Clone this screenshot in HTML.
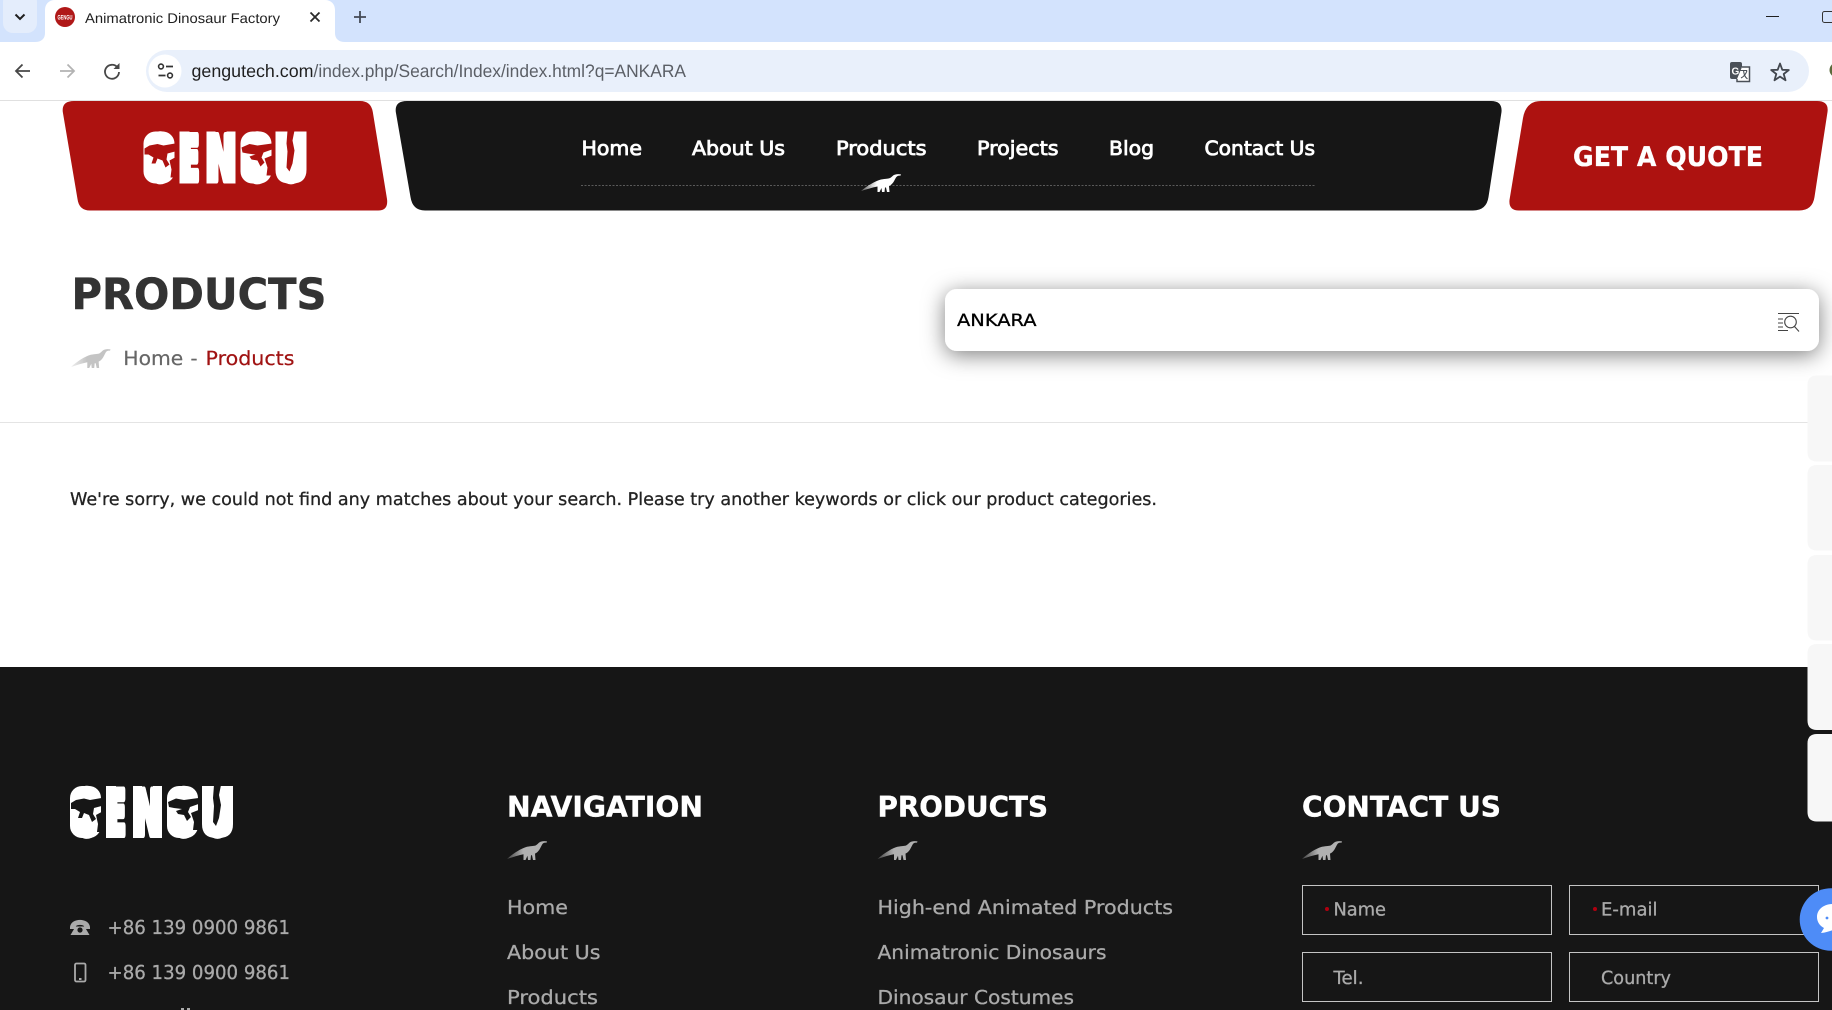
<!DOCTYPE html>
<html lang="en">
<head>
<meta charset="utf-8">
<title>Animatronic Dinosaur Factory</title>
<style>
html,body{margin:0;padding:0;width:1832px;height:1010px;overflow:hidden;background:#fff}
svg{display:block;position:absolute;left:0;top:0}
text{font-family:"Liberation Sans",sans-serif;text-rendering:geometricPrecision}
.m text,text.m{font-family:"DejaVu Sans","Liberation Sans",sans-serif}
a{cursor:pointer}
</style>
</head>
<body>
<svg width="1832" height="1010" viewBox="0 0 1832 1010" xmlns="http://www.w3.org/2000/svg">
<defs>
  <linearGradient id="fg" x1="0" x2="1" y1="0" y2="0">
    <stop offset="0" stop-color="#fff" stop-opacity=".3"/>
    <stop offset=".4" stop-color="#fff" stop-opacity="1"/>
  </linearGradient>
  <mask id="fm" maskUnits="userSpaceOnUse" x="0" y="0" width="40" height="18">
    <rect width="40" height="18" fill="url(#fg)"/>
  </mask>
  <symbol id="dino" viewBox="0 0 40 18" preserveAspectRatio="none">
    <path fill="currentColor" mask="url(#fm)" d="M0 17C6 12 14 7 20 5.5C25 4.5 27 5 29 4C31 3 32 1 34 .6C36 0 38 0 40 .4L39.5 1.6C37 1.4 36 2 35 3.5C33 7 32 10 28 12L28.5 18L26 18L25 13.5L24 13.5L23.5 18L21 18L20.5 14L18.5 18L16.5 18L16.5 12.5C11 13.5 5 15.5 0 17Z"/>
  </symbol>
  <filter id="shadow" x="-6%" y="-80%" width="112%" height="260%">
    <feDropShadow dx="0" dy="4" stdDeviation="11" flood-color="#000" flood-opacity=".5"/>
  </filter>
  <g id="logo">
    <rect x="70" y="786" width="31" height="52" rx="12" fill="#fff"/>
    <rect x="167" y="786" width="31" height="52" rx="12" fill="#fff"/>
    <path d="M202 786H233V824Q233 838 219 838H216Q202 838 202 824Z" fill="#fff"/>
    <rect x="106" y="786" width="10" height="52" fill="#fff"/>
    <rect x="133" y="786" width="9" height="52" fill="#fff"/>
    <rect x="153" y="786" width="9" height="52" fill="#fff"/>
    <text class="m" y="834.5" fill="#fff" stroke="#fff" stroke-width="7" stroke-linejoin="round" font-weight="700" font-size="61" style="font-family:'DejaVu Sans',sans-serif"><tspan x="73" textLength="25" lengthAdjust="spacingAndGlyphs">G</tspan><tspan x="109" textLength="17" lengthAdjust="spacingAndGlyphs">E</tspan><tspan x="136" textLength="23" lengthAdjust="spacingAndGlyphs">N</tspan><tspan x="170" textLength="25" lengthAdjust="spacingAndGlyphs">G</tspan><tspan x="205" textLength="25" lengthAdjust="spacingAndGlyphs">U</tspan></text>
    <g fill="currentColor">
      <path d="M71 803L76 800L84 798.5L90 800L101.500 798V806L94 808L93 814L96 819L92 822L89 815L84 813L82 818L78 818L80 812L75 809L71 809Z"/>
      <path d="M96 815L101.500 812V832L97 832L98 824Z"/>
      <path d="M168 802L176 798.500L184 800L198.500 798V804L190 807L188 812L191 817L187 821L184 815L178 814L176 811L182 809L174 808L169 807Z"/>
      <path d="M191 813L198.500 810V830L193 830L194 822Z"/>
      <path d="M214 785H221L219 795L221 805L219 818L216 826L213 822L214 806L213 798Z"/>
    </g>
  </g>
</defs>

<!-- Browser tab strip -->
<rect x="0" y="0" width="1832" height="42" fill="#d3e3fd"/>
<rect x="3" y="-8" width="34" height="41" rx="10" fill="#e4edfc"/>
<path d="M15.5 14.5L20 19L24.5 14.5" fill="none" stroke="#1f1f1f" stroke-width="2"/>
<path d="M35 42C41 42 45 39 45 33V10C45 4 49 0 55 0H325C331 0 335 4 335 10V33C335 39 339 42 345 42Z" fill="#fff"/>
<circle cx="65" cy="17" r="10" fill="#b01818"/>
<text x="57.5" y="19.5" font-size="6.5" font-weight="700" fill="#fff" textLength="15" lengthAdjust="spacingAndGlyphs">GENGU</text>
<text x="85" y="23" font-size="14" fill="#1f1f1f" textLength="195" lengthAdjust="spacingAndGlyphs">Animatronic Dinosaur Factory</text>
<path d="M310.5 12.5L319.5 21.5M319.5 12.5L310.5 21.5" stroke="#2a2a2a" stroke-width="1.8" fill="none"/>
<path d="M360 11V23M354 17H366" stroke="#444a55" stroke-width="1.8" fill="none"/>
<rect x="1766" y="16" width="13" height="1" fill="#1f1f1f"/>
<rect x="1822.5" y="11.5" width="14" height="11" rx="2" fill="none" stroke="#333" stroke-width="1"/>

<!-- Toolbar -->
<rect x="0" y="42" width="1832" height="58" fill="#fff"/>
<rect x="0" y="100" width="1832" height="1" fill="#e0e0e0"/>
<path d="M30 71H16.5M22.5 64.5L16 71L22.5 77.5" fill="none" stroke="#474747" stroke-width="1.8"/>
<path d="M60 71H73.5M67.5 64.5L74 71L67.5 77.5" fill="none" stroke="#b3b3b3" stroke-width="1.8"/>
<path d="M117.3 67.2A7 7 0 1 0 119 72" fill="none" stroke="#474747" stroke-width="1.8"/>
<path d="M119.5 63V69H113.5Z" fill="#474747"/>
<rect x="146" y="50" width="1663" height="42" rx="21" fill="#e9f0fb"/>
<circle cx="165" cy="71" r="16.5" fill="#fff"/>
<circle cx="161" cy="66.5" r="2.4" fill="none" stroke="#333" stroke-width="1.6"/>
<path d="M166 66.5H173M158.5 75.5H165.5" stroke="#333" stroke-width="1.7"/>
<circle cx="170" cy="75.5" r="2.4" fill="none" stroke="#333" stroke-width="1.6"/>
<text x="191.5" y="77" font-size="18" fill="#1f1f1f" textLength="122" lengthAdjust="spacingAndGlyphs">gengutech.com</text>
<text x="313.5" y="77" font-size="18" fill="#5b5f66" textLength="372.5" lengthAdjust="spacingAndGlyphs">/index.php/Search/Index/index.html?q=ANKARA</text>
<rect x="1730" y="62" width="12" height="17" rx="2" fill="#4a5058"/>
<text x="1731.5" y="74.5" font-size="10" font-weight="700" fill="#fff">G</text>
<path d="M1742 67H1749.5V81.5H1737V79" fill="#fff" stroke="#4a5058" stroke-width="1.5"/>
<path d="M1740.5 70.5H1747M1743.5 70C1744 75 1745 77 1747.5 79M1747 70.5C1746 74 1744 76.5 1741 78" fill="none" stroke="#4a5058" stroke-width="1.1"/>
<path d="M1780 63.5L1782.3 69.8L1788.8 70L1783.7 74L1785.5 80.3L1780 76.6L1774.5 80.3L1776.3 74L1771.2 70L1777.7 69.8Z" fill="none" stroke="#42474e" stroke-width="1.8" stroke-linejoin="round"/>
<circle cx="1837" cy="70" r="7.5" fill="#5b6a3c"/>

<!-- Header shapes -->
<path d="M74 101H360Q371 101 372.8 112L387 199Q388.5 210.5 378 210.5H90Q79 210.5 77.5 199L62.8 112Q61.5 101 74 101Z" fill="#ad1210"/>
<path d="M407 101H1491Q1502.5 101 1501.5 112L1488.5 197Q1486.5 210.5 1473 210.5H425Q412.5 210.5 410.5 197L395.8 112Q394.5 101 407 101Z" fill="#161616"/>
<path d="M1541 101H1817Q1829 101 1827.5 112L1814.5 197Q1812.5 210.5 1799 210.5H1519Q1508.5 210.5 1509.5 200L1523 118Q1526 101 1541 101Z" fill="#ad1210"/>

<!-- Header logo -->
<use href="#logo" transform="translate(73.5 -654.5)" style="color:#ad1210"/>

<!-- Navigation -->
<g class="m" fill="#fff" font-size="19.6" stroke="#fff" stroke-width=".8">
  <a href="#"><text x="581.5" y="155" textLength="60.5" lengthAdjust="spacingAndGlyphs">Home</text></a>
  <a href="#"><text x="692" y="155" textLength="93" lengthAdjust="spacingAndGlyphs">About Us</text></a>
  <a href="#"><text x="836" y="155" textLength="90.5" lengthAdjust="spacingAndGlyphs">Products</text></a>
  <a href="#"><text x="977" y="155" textLength="81.5" lengthAdjust="spacingAndGlyphs">Projects</text></a>
  <a href="#"><text x="1109" y="155" textLength="45" lengthAdjust="spacingAndGlyphs">Blog</text></a>
  <a href="#"><text x="1204.5" y="155" textLength="110.5" lengthAdjust="spacingAndGlyphs">Contact Us</text></a>
</g>
<line x1="581" y1="185.5" x2="1315" y2="185.5" stroke="#5a5a5a" stroke-width="1" stroke-dasharray="2 1.5"/>
<use href="#dino" x="861" y="174" width="40" height="18" style="color:#fff"/>
<a href="#"><text class="m" x="1573" y="166" font-size="27" font-weight="700" fill="#fff" stroke="#fff" stroke-width=".3" textLength="190" lengthAdjust="spacingAndGlyphs">GET A QUOTE</text></a>

<!-- Page title -->
<text class="m" x="71.5" y="309" font-size="43" font-weight="700" fill="#333" stroke="#333" stroke-width=".5" textLength="255" lengthAdjust="spacingAndGlyphs">PRODUCTS</text>
<use href="#dino" x="71" y="349" width="39.5" height="19" style="color:#c4c4c4"/>
<g class="m" font-size="19.4" stroke-width=".2">
  <text x="123.3" y="365" fill="#666" stroke="#666" textLength="60" lengthAdjust="spacingAndGlyphs">Home</text>
  <text x="190.5" y="365" fill="#666" stroke="#666">-</text>
  <text x="205.5" y="365" fill="#a01212" stroke="#a01212" textLength="89" lengthAdjust="spacingAndGlyphs">Products</text>
</g>

<!-- Search -->
<rect x="945" y="289" width="874" height="62" rx="12" fill="#fff" filter="url(#shadow)"/>
<text class="m" x="957" y="326" font-size="17" fill="#000" stroke="#000" stroke-width=".3" textLength="79.5" lengthAdjust="spacingAndGlyphs">ANKARA</text>
<g fill="none" stroke="#444" stroke-width="1.1">
  <path d="M1778 313.5H1799M1778 319H1783M1778 323H1783M1778 327H1783M1778 330.5H1788"/>
  <circle cx="1790.5" cy="322" r="5.8"/>
  <path d="M1794.5 326.5L1799 331.5"/>
</g>

<!-- Divider + message -->
<rect x="0" y="422" width="1832" height="1" fill="#e4e4e4"/>
<text class="m" x="70" y="505" font-size="17.4" fill="#222" stroke="#222" stroke-width=".28" textLength="1087" lengthAdjust="spacingAndGlyphs">We're sorry, we could not find any matches about your search. Please try another keywords or click our product categories.</text>

<!-- Footer -->
<rect x="0" y="667" width="1832" height="343" fill="#161616"/>
<use href="#logo" style="color:#161616"/>

<path d="M70 927C71 917.5 89 917.5 90 927V929H84.5L84 926C82 924.5 78 924.5 76 926L75.5 929H70Z" fill="#aaa"/>
<path d="M75.5 926.5H84.5L89.5 935H70.5Z" fill="#aaa"/><circle cx="80" cy="930" r="2.6" fill="#161616"/>
<rect x="75" y="963.5" width="10.5" height="18" rx="1.5" fill="none" stroke="#aaa" stroke-width="1.8"/>
<rect x="79" y="978" width="2.5" height="2" fill="#aaa"/>
<g class="m" fill="#aaa" stroke="#aaa" stroke-width=".3" font-size="19.2">
  <text x="107.500" y="934" textLength="182.500" lengthAdjust="spacingAndGlyphs">+86 139 0900 9861</text>
  <text x="107.500" y="979" textLength="182.500" lengthAdjust="spacingAndGlyphs">+86 139 0900 9861</text>
</g>
<rect x="181" y="1008" width="3" height="2" fill="#aaa"/><rect x="187" y="1008" width="3" height="2" fill="#aaa"/>

<g class="m" fill="#fff" stroke="#fff" stroke-width=".4" font-size="28.4" font-weight="700">
  <text x="507" y="816.5" textLength="196" lengthAdjust="spacingAndGlyphs">NAVIGATION</text>
  <text x="877.5" y="816.5" textLength="170.5" lengthAdjust="spacingAndGlyphs">PRODUCTS</text>
  <text x="1302" y="816.5" textLength="199" lengthAdjust="spacingAndGlyphs">CONTACT US</text>
</g>
<g style="color:#b0b0b0">
  <use href="#dino" x="507" y="841" width="40" height="19"/>
  <use href="#dino" x="877.5" y="841" width="40" height="19"/>
  <use href="#dino" x="1302" y="841" width="40" height="19"/>
</g>
<g class="m" fill="#aaa" stroke="#aaa" stroke-width=".3" font-size="19.2">
  <a href="#"><text x="507" y="914" textLength="61" lengthAdjust="spacingAndGlyphs">Home</text></a>
  <a href="#"><text x="507" y="959" textLength="93.5" lengthAdjust="spacingAndGlyphs">About Us</text></a>
  <a href="#"><text x="507" y="1004" textLength="91" lengthAdjust="spacingAndGlyphs">Products</text></a>
  <a href="#"><text x="877.5" y="914" textLength="295.5" lengthAdjust="spacingAndGlyphs">High-end Animated Products</text></a>
  <a href="#"><text x="877.5" y="959" textLength="229" lengthAdjust="spacingAndGlyphs">Animatronic Dinosaurs</text></a>
  <a href="#"><text x="877.5" y="1004" textLength="196.5" lengthAdjust="spacingAndGlyphs">Dinosaur Costumes</text></a>
</g>

<!-- Form -->
<g fill="none" stroke="#c4c4c4" stroke-width="1">
  <rect x="1302.5" y="885.5" width="249" height="49"/>
  <rect x="1569.5" y="885.5" width="249" height="49"/>
  <rect x="1302.5" y="952.5" width="249" height="49"/>
  <rect x="1569.5" y="952.5" width="249" height="49"/>
</g>
<circle cx="1327" cy="909" r="2" fill="#b00010"/>
<circle cx="1595" cy="909" r="2" fill="#b00010"/>
<g class="m" fill="#aaa" stroke="#aaa" stroke-width=".3" font-size="18.2">
  <text x="1333.5" y="915.5" textLength="52.5" lengthAdjust="spacingAndGlyphs">Name</text>
  <text x="1601" y="915.5" textLength="56.5" lengthAdjust="spacingAndGlyphs">E-mail</text>
  <text x="1333.5" y="984" textLength="30" lengthAdjust="spacingAndGlyphs">Tel.</text>
  <text x="1601" y="984" textLength="70" lengthAdjust="spacingAndGlyphs">Country</text>
</g>

<!-- Right floating tabs -->
<g fill="#f7f7f7">
  <path d="M1832 375.5H1817Q1807.5 375.5 1807.5 385V452Q1807.5 461.5 1817 461.5H1832Z"/>
  <path d="M1832 465H1817Q1807.5 465 1807.5 474.5V541Q1807.5 550.5 1817 550.5H1832Z"/>
  <path d="M1832 555H1817Q1807.5 555 1807.5 564.5V631Q1807.5 640.5 1817 640.5H1832Z"/>
  <path d="M1832 644H1817Q1807.5 644 1807.5 653.5V720.5Q1807.5 730 1817 730H1832Z"/>
  <path d="M1832 734H1817Q1807.5 734 1807.5 743.5V812Q1807.5 821.5 1817 821.5H1832Z"/>
</g>

<!-- Chat button -->
<circle cx="1831" cy="919.5" r="31.3" fill="#4e8cf7"/>
<path d="M1833 904C1823 904 1817 910 1817 917C1817 922 1820 926 1824 928L1821 933C1826 932.5 1830 931 1833 930Z" fill="#fff"/>
<circle cx="1827" cy="918" r="1.4" fill="#4e8cf7"/>
</svg>
</body>
</html>
